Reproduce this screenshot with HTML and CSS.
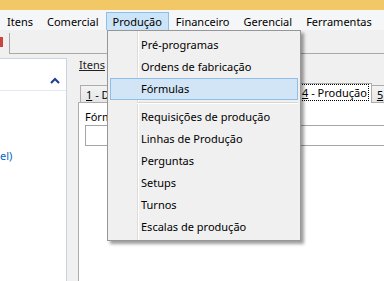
FILE: index.html
```html
<!DOCTYPE html>
<html lang="pt-BR">
<head>
  <meta charset="UTF-8" />
  <title>Produção</title>
  <link rel="stylesheet" href="styles.css">
</head>
<body>
  <div class="titlebar"></div>

  <div class="menubar">
    <span class="menu-item">Itens</span>
    <span class="menu-item">Comercial</span>
    <span class="menu-item open">Produção</span>
    <span class="menu-item">Financeiro</span>
    <span class="menu-item">Gerencial</span>
    <span class="menu-item">Ferramentas</span>
  </div>

  <div class="docbar">
    <div class="doctab"><span class="doc-close"></span></div>
  </div>

  <div class="main">
    <div class="sidebar">
      <div class="side-head">
        <svg class="chevron" viewBox="0 0 10 7"><polyline points="1,6 5,2 9,6"/></svg>
      </div>
      <div class="side-body"><span class="side-link">el)</span></div>
    </div>

    <div class="content">
      <div class="content-title">Itens</div>
      <div class="tabs">
        <div class="tab tab-dados"><u>1</u> - Dados gerais</div>
        <div class="tab tab-estrutura"><u>2</u> - Estrutura</div>
        <div class="tab tab-custos"><u>3</u> - Custos</div>
        <div class="tab active"><span class="focus"><u>4</u> - Produção</span></div>
        <div class="tab"><u>5</u> - Estoque</div>
      </div>
      <div class="tabpage">
        <div class="field-label">Fórmula</div>
        <div class="field-input"></div>
      </div>
    </div>
  </div>

  <!-- menu aberto de Produção -->
  <div class="dropdown">
    <div class="drop-item">Pré-programas</div>
    <div class="drop-item">Ordens de fabricação</div>
    <div class="drop-item hover">Fórmulas</div>
    <div class="drop-sep"></div>
    <div class="drop-item">Requisições de produção</div>
    <div class="drop-item">Linhas de Produção</div>
    <div class="drop-item">Perguntas</div>
    <div class="drop-item">Setups</div>
    <div class="drop-item">Turnos</div>
    <div class="drop-item">Escalas de produção</div>
  </div>
</body>
</html>
```

FILE: styles.css
```css
* { margin: 0; padding: 0; box-sizing: border-box; }
html, body { width: 384px; height: 281px; overflow: hidden; }
body {
  background: #f0f0f0; color: #000;
  font-family: "Noto Sans", "Open Sans", sans-serif; font-size: 11px;
  display: flex; flex-direction: column; position: relative;
}

.titlebar { height: 10px; background: #f2c766; flex: none; }

.menubar { height: 20px; background: #f5f6f7; display: flex; flex: none; }
.menu-item {
  margin-top: 2px; height: 18px; padding: 0 6px;
  border: 1px solid transparent; line-height: 17px; white-space: nowrap;
}
.menu-item.open { background: #cce4f7; border-color: #8fbfe6; border-bottom: none; }

.docbar { height: 24px; border-bottom: 1px solid #a9a9a9; display: flex; flex: none; }
.doctab { width: 10px; margin-top: 3px; border-right: 1px solid #a9a9a9; margin-bottom: -1px; background: #f0f0f0; }
.doc-close { display: block; width: 3px; height: 10px; margin-top: 4px; background: #c9453d; }

.main { flex: 1; display: flex; min-height: 0; }

.sidebar {
  width: 67px; margin-top: 4px; background: #fff;
  border-top: 1px solid #c5d5e6; border-right: 1px solid #c5d5e6;
  display: flex; flex-direction: column; flex: none;
}
.side-head {
  height: 32px; border-bottom: 1px solid #e2e8ef;
  display: flex; justify-content: flex-end; padding: 18px 6px 0 0;
}
.chevron { width: 10px; height: 7px; fill: none; stroke: #1a3e93; stroke-width: 2; }
.side-body { padding-top: 57px; }
.side-link { color: #0066cc; line-height: 15px; }

.content { flex: 1; margin-left: 11px; display: flex; flex-direction: column; min-width: 0; overflow: hidden; }
.content-title { margin-top: 3px; line-height: 15px; padding-left: 1px; text-decoration: underline; color: #222; }

.tabs { display: flex; align-items: flex-end; height: 19px; margin-top: 11px; padding-left: 2px; position: relative; z-index: 1; }
.tab {
  height: 17px; padding: 0 5px; line-height: 17px; white-space: nowrap; flex: none; overflow: hidden;
  background: linear-gradient(#f3f3f3, #e6e6e6);
  border: 1px solid #acacac; border-bottom: none; margin-right: -1px;
}
.tab-dados { width: 90px; }
.tab-estrutura { width: 70px; }
.tab-custos { width: 61px; }
.tab.active {
  height: 20px; margin-bottom: -1px; padding: 0 2px 0 1px;
  background: #fff; line-height: 15px;
}
.focus { display: block; border: 1px dotted #000; padding: 0 1px; }

.tabpage { flex: 1; background: #fff; border: 1px solid #acacac; border-right: none; border-bottom: none; padding: 6px 0 0 6px; }
.field-label { line-height: 15px; }
.field-input { margin-top: 1px; width: 400px; height: 21px; border: 1px solid #a5a5a5; background: #fff; }

.dropdown {
  position: absolute; left: 107px; top: 30px; width: 194px;
  background: linear-gradient(to right, #f0f0f0 29px, #dcdcdc 29px, #dcdcdc 30px, #fff 30px, #fff 31px, #f0f0f0 31px);
  border: 1px solid #979797; padding: 3px 0 2px;
  box-shadow: 3px 3px 3px rgba(0,0,0,0.38);
  z-index: 10;
}
.drop-item {
  height: 22px; margin: 0 2px; padding-left: 30px;
  border: 1px solid transparent; line-height: 20px; white-space: nowrap;
}
.drop-item.hover { background: #d1e5f7; border-color: #8fbfe6; }
.drop-sep { height: 6px; margin: 0 2px 0 29px; padding-top: 2px; }
.drop-sep::before { content: ""; display: block; border-top: 1px solid #d7d7d7; border-bottom: 1px solid #fff; }
```
